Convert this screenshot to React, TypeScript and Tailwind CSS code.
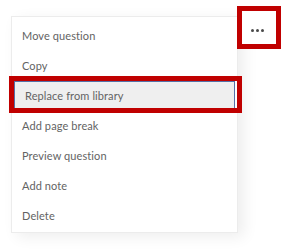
import React from 'react';

const items = [
  'Move question',
  'Copy',
  'Replace from library',
  'Add page break',
  'Preview question',
  'Add note',
  'Delete',
];

export default function App() {
  return (
    <div className="relative w-[287px] h-[249px] bg-white overflow-hidden" style={{ fontFamily: 'Lato, "Noto Sans", sans-serif' }}>
      {/* Dropdown menu */}
      <div className="flex pl-[11px] pt-[16px]">
        <div className="w-[227px] h-[217px] border border-[#ececec] bg-white shadow-[6px_4px_14px_rgba(0,0,0,0.07)] pt-[4px] flex flex-col">
          {items.map((label, i) => (
            <div
              key={label}
              className={`h-[30px] flex items-center pl-[10px] text-[11px] tracking-[0.1px] text-[#636363] ${
                i === 2 ? 'bg-[#efefef] mx-[2px] pl-[8px] border border-[#5570a8]' : ''
              }`}
            >
              {label}
            </div>
          ))}
        </div>
      </div>

      {/* More button, annotated */}
      <div className="absolute left-[237px] top-[6px] w-[44px] h-[43px] border-[5px] border-[#c00000] bg-white flex items-center justify-center gap-[2px] pt-[5px] pr-[3px]">
        <span className="w-[3px] h-[3px] rounded-full bg-[#4a4a4a]" />
        <span className="w-[3px] h-[3px] rounded-full bg-[#4a4a4a]" />
        <span className="w-[3px] h-[3px] rounded-full bg-[#4a4a4a]" />
      </div>

      {/* Annotation around highlighted item */}
      <div className="absolute left-[9px] top-[76px] w-[233px] h-[37px] border-[5px] border-[#c00000]" />
    </div>
  );
}
